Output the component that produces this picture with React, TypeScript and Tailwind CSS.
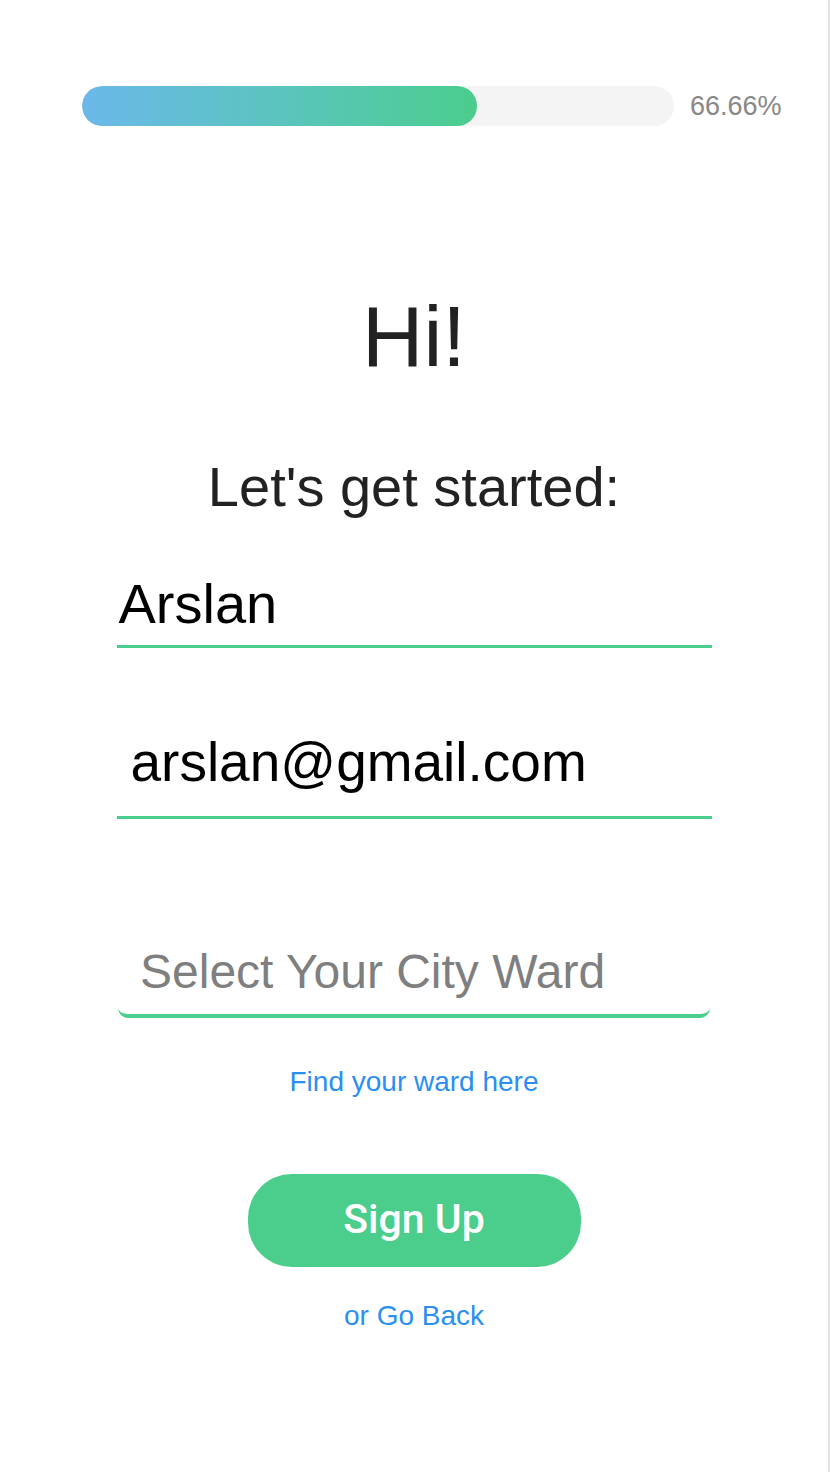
export default function App() {
  const progress = 66.66;

  return (
    <div className="w-[830px] min-h-[1472px] bg-white border-r-2 border-[#e2e2e2] font-['Liberation_Sans',Arial,sans-serif]">
      {/* progress */}
      <div className="flex items-center pt-[86px] pl-[82px]">
        <div className="w-[592px] h-10 rounded-full bg-[#f4f4f4] overflow-hidden">
          <div
            className="h-full rounded-full bg-gradient-to-r from-[#6bb8ea] to-[#4bcd8c]"
            style={{ width: `${progress}%` }}
          />
        </div>
        <span className="ml-4 text-[27px] text-[#888888]">{progress}%</span>
      </div>

      <h1 className="mt-[167px] text-center text-[85px] leading-none font-normal text-[#222222]">Hi!</h1>
      <h2 className="mt-[80px] text-center text-[56px] leading-none font-normal text-[#222222]">Let's get started:</h2>

      <div className="w-[595px] mx-auto mt-[61px] pl-[2px] pb-[13px] border-b-[3px] border-[#4bcd8c] text-[56px] leading-none text-black">
        Arslan
      </div>

      <div className="w-[595px] mx-auto mt-[87px] pl-[14px] pb-[26px] border-b-[3px] border-[#4bcd8c] text-[55px] leading-none text-black">
        arslan@gmail.com
      </div>

      <div className="w-[592px] mx-auto mt-[129px] pl-[22px] pb-[18px] border-b-4 border-[#4bcd8c] rounded-b-[10px] text-[48px] leading-none text-[#7f7f7f]">
        Select Your City Ward
      </div>

      <div className="mt-[50px] text-center text-[28px] leading-none text-[#2b8ff1]">Find your ward here</div>

      <div className="mt-[78px] mx-auto w-[333px] h-[93px] rounded-[44px] bg-[#4bcd8c] flex items-center justify-center">
        <span className="font-['Roboto',sans-serif] font-medium text-[41px] text-white">Sign Up</span>
      </div>

      <div className="mt-[35px] text-center text-[28px] leading-none text-[#2b8ff1]">or Go Back</div>
    </div>
  );
}
